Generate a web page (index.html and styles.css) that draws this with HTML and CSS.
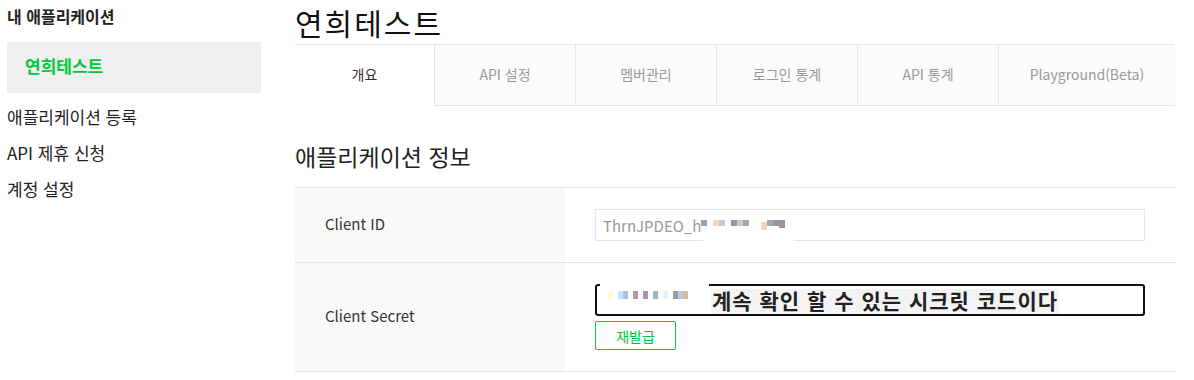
FILE: index.html
```html
<!DOCTYPE html>
<html lang="ko">
<head>
    <meta charset="UTF-8">
    <meta name="viewport" content="width=device-width, initial-scale=1.0">
    <title>연희테스트 - 내 애플리케이션</title>
    <link rel="stylesheet" href="styles.css">
</head>
<body>

    <div class="layout">
        <div class="sidebar">
            <h3 class="sidebar-title">내 애플리케이션</h3>
            <div class="app-item active">연희테스트</div>
            <ul class="menu">
                <li>애플리케이션 등록</li>
                <li>API 제휴 신청</li>
                <li>계정 설정</li>
            </ul>
        </div>

        <div class="main">
            <h1 class="app-title">연희테스트</h1>
            <ul class="tabs">
                <li class="tab on">개요</li>
                <li class="tab">API 설정</li>
                <li class="tab">멤버관리</li>
                <li class="tab">로그인 통계</li>
                <li class="tab">API 통계</li>
                <li class="tab">Playground(Beta)</li>
            </ul>

            <h2 class="section-title">애플리케이션 정보</h2>
            <div class="info-table">
                <div class="row">
                    <div class="label">Client ID</div>
                    <div class="value">
                        <div class="id-input">
                            ThrnJPDEO_h<span class="px">
                                <i style="background:#9aa0ab"></i><i style="background:#fff"></i><i style="background:#f2d6bf"></i><i style="background:#c6c9cf"></i><i style="background:#fff"></i><i style="background:#8f99a8"></i><i style="background:#d5c9b8"></i><i style="background:#9aa7b8"></i><i style="background:#fff"></i><i style="background:#fff"></i><i class="big" style="background:#f9d4b4"></i><i style="background:#9eabb9"></i><i style="background:#8f99a8"></i><i class="low" style="background:#a58f8f"></i>
                            </span>
                            <span class="cover"></span>
                        </div>
                    </div>
                </div>
                <div class="row">
                    <div class="label">Client Secret</div>
                    <div class="value">
                        <div class="secret-box">
                            <span class="cover-top"></span>
                            <span class="px secret-px">
                                <i style="background:#fdf8d6"></i><i style="background:#fff"></i><i style="background:#c3e3f7"></i><i style="background:#a9c3dc"></i><i style="background:#fff"></i><i style="background:#a99aa5"></i><i style="background:#fff"></i><i style="background:#a599a8"></i><i style="background:#fff"></i><i style="background:#9eb2cc"></i><i style="background:#fff"></i><i style="background:#e3f5f7"></i><i style="background:#fff"></i><i style="background:#a499a8"></i><i style="background:#b5cbe6"></i><i style="background:#d6b9a1"></i>
                            </span>
                            <span class="secret-note">계속 확인 할 수 있는 시크릿 코드이다</span>
                        </div>
                        <button class="reissue-btn">재발급</button>
                    </div>
                </div>
            </div>
        </div>
    </div>

</body>
</html>
```

FILE: styles.css
```css
body {
    font-family: "Noto Sans CJK KR", "Noto Sans", sans-serif;
    margin: 0;
    padding: 0;
    color: #222;
    background: #fff;
}
ul {
    list-style: none;
    margin: 0;
    padding: 0;
}
.layout {
    display: flex;
    padding-left: 7px;
}
.sidebar {
    width: 254px;
    flex-shrink: 0;
}
.sidebar-title {
    margin: 0;
    font-size: 16px;
    font-weight: bold;
    line-height: 32px;
    color: #222;
}
.app-item {
    margin-top: 10px;
    height: 51px;
    line-height: 48px;
    padding-left: 18px;
    background: #efefef;
    font-size: 17px;
    font-weight: bold;
    color: #00c73c;
}
.menu {
    margin-top: 6px;
}
.menu li {
    font-size: 17px;
    line-height: 36px;
    color: #222;
}
.main {
    margin-left: 34px;
    width: 880px;
}
.app-title {
    margin: 0;
    font-size: 30px;
    font-weight: normal;
    line-height: 44px;
    letter-spacing: 2px;
    color: #111;
}
.tabs {
    display: flex;
    border-top: 1px solid #e5e5e5;
}
.tab {
    box-sizing: border-box;
    width: 141px;
    height: 61px;
    line-height: 58px;
    text-align: center;
    font-size: 14px;
    color: #999;
    background: #fbfbfb;
    border-left: 1px solid #e5e5e5;
    border-bottom: 1px solid #e5e5e5;
}
.tab.on {
    width: 139px;
    border-left: none;
    border-bottom: none;
    background: #fff;
    color: #333;
}
.tab:last-child {
    flex: 1;
}
.section-title {
    margin: 34px 0 15px;
    font-size: 23px;
    font-weight: normal;
    line-height: 32px;
    color: #222;
}
.info-table {
    border-top: 1px solid #e5e5e5;
}
.row {
    display: flex;
    border-bottom: 1px solid #e5e5e5;
}
.label {
    width: 270px;
    box-sizing: border-box;
    padding: 0 0 3px 30px;
    background: #f9f9f9;
    display: flex;
    align-items: center;
    font-size: 15px;
    color: #333;
}
.value {
    flex: 1;
    padding: 21px 30px;
}
.id-input {
    position: relative;
    box-sizing: border-box;
    height: 32px;
    border: 1px solid #e5e5e5;
    padding-left: 7px;
    display: flex;
    align-items: center;
    font-size: 15px;
    color: #999;
}
.px {
    display: inline-flex;
    align-items: flex-start;
    height: 10px;
}
.px i {
    display: inline-block;
    width: 6px;
    height: 6px;
}
.px i.big {
    height: 8px;
    margin-top: 2px;
}
.px i.low {
    height: 8px;
}
.cover {
    position: absolute;
    left: 107px;
    bottom: -1px;
    width: 91px;
    height: 5px;
    background: #fff;
}
.secret-box {
    position: relative;
    box-sizing: border-box;
    height: 32px;
    border: 2px solid #111;
    border-radius: 3px;
    display: flex;
    align-items: center;
}
.cover-top {
    position: absolute;
    top: -2px;
    left: 3px;
    width: 109px;
    height: 3px;
    background: #fff;
}
.secret-px {
    margin-left: 11px;
    margin-top: -10px;
    height: 8px;
}
.secret-px i {
    width: 5px;
    height: 8px;
}
.secret-note {
    margin-left: 23px;
    margin-top: 2px;
    padding: 0 1px;
    height: 25px;
    line-height: 23px;
    background: #f3f3f3;
    font-size: 21px;
    font-weight: bold;
    color: #222;
    letter-spacing: 1px;
}
.reissue-btn {
    display: block;
    margin-top: 5px;
    width: 81px;
    height: 29px;
    padding: 0;
    border: 1px solid #00c73c;
    border-radius: 2px;
    background: #fff;
    color: #00c73c;
    font-family: inherit;
    font-size: 14px;
    cursor: pointer;
}
```
